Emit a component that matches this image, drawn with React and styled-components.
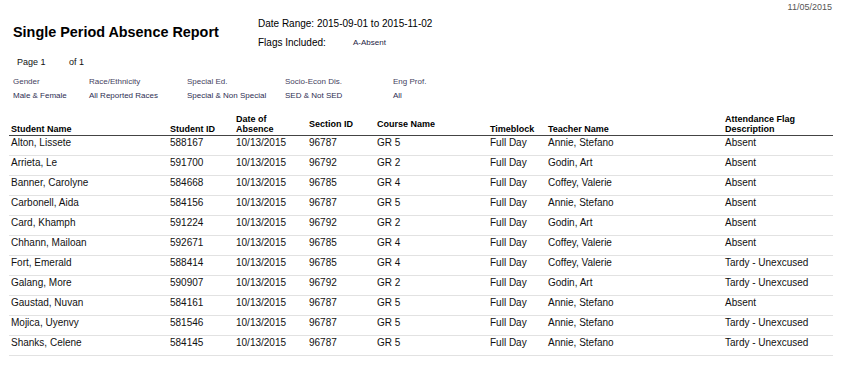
import React from "react";
import styled, { createGlobalStyle } from "styled-components";

const Global = createGlobalStyle`
  html, body { margin: 0; padding: 0; background: #fff; }
  body { font-family: "Liberation Sans", Arial, sans-serif; color: #111; }
`;

const Page = styled.div`
  width: 855px;
  height: 367px;
  overflow: hidden;
  background: #fff;
`;

const DateStamp = styled.div`
  text-align: right;
  padding: 2px 23px 0 0;
  font-size: 9px;
  line-height: 11px;
  color: #555;
`;

const Header = styled.div`
  display: flex;
  margin-top: 5px;
`;

const Title = styled.h1`
  margin: 6px 0 0;
  box-sizing: border-box;
  width: 258px;
  padding-left: 13px;
  font-size: 14.4px;
  line-height: 16px;
  font-weight: bold;
  color: #000;
`;

const Info = styled.div`
  display: flex;
  flex-direction: column;
  gap: 7px;
  font-size: 10px;
  line-height: 12px;
  color: #000;
`;

const InfoRow = styled.div`
  display: flex;
  align-items: center;
`;

const InfoLabel = styled.span`
  width: 95px;
`;

const Flag = styled.span`
  font-size: 8px;
  color: #1c1c44;
`;

const PageRow = styled.div`
  display: flex;
  margin-top: 8px;
  padding-left: 17px;
  font-size: 9px;
  line-height: 11px;
  color: #111;
`;

const PageCell = styled.span`
  width: ${(p) => p.$w || "auto"};
`;

const Filters = styled.div`
  display: grid;
  grid-template-columns: 76px 98px 98px 108px 1fr;
  row-gap: 4px;
  margin-top: 9px;
  padding-left: 13px;
  font-size: 8px;
  line-height: 10px;
`;

const FilterText = styled.span`
  color: ${(p) => (p.$value ? "#2e2e52" : "#45425e")};
`;

const Table = styled.div`
  margin: 13px 0 0 9px;
  width: 824px;
`;

const cols = "161px 66px 73px 68px 113px 58px 177px 108px";

const HeadRow = styled.div`
  display: grid;
  grid-template-columns: ${cols};
  height: 20px;
  padding-bottom: 1px;
  border-bottom: 1px solid #444;
`;

const HeadCell = styled.div`
  display: flex;
  align-items: ${(p) => (p.$middle ? "center" : "flex-end")};
  padding-left: ${(p) => (p.$first ? "2px" : "0")};
  font-size: 9px;
  line-height: 10px;
  font-weight: bold;
  color: #000;
  white-space: pre;
`;

const Row = styled.div`
  display: grid;
  grid-template-columns: ${cols};
  height: 19px;
  box-sizing: content-box;
  border-bottom: 1px solid #e2e2e2;
`;

const Cell = styled.div`
  padding: 1px 0 0 ${(p) => (p.$first ? "2px" : "0")};
  font-size: 10px;
  line-height: 12px;
  color: #111;
  white-space: nowrap;
`;

const filters = [
  ["Gender", "Male & Female"],
  ["Race/Ethnicity", "All Reported Races"],
  ["Special Ed.", "Special & Non Special"],
  ["Socio-Econ Dis.", "SED & Not SED"],
  ["Eng Prof.", "All"],
];

const headers = [
  { label: "Student Name" },
  { label: "Student ID" },
  { label: "Date of\nAbsence" },
  { label: "Section ID", middle: true },
  { label: "Course Name", middle: true },
  { label: "Timeblock" },
  { label: "Teacher Name" },
  { label: "Attendance Flag\nDescription" },
];

const rows = [
  ["Alton, Lissete", "588167", "96787", "GR 5", "Annie, Stefano", "Absent"],
  ["Arrieta, Le", "591700", "96792", "GR 2", "Godin, Art", "Absent"],
  ["Banner, Carolyne", "584668", "96785", "GR 4", "Coffey, Valerie", "Absent"],
  ["Carbonell, Aida", "584156", "96787", "GR 5", "Annie, Stefano", "Absent"],
  ["Card, Khamph", "591224", "96792", "GR 2", "Godin, Art", "Absent"],
  ["Chhann, Mailoan", "592671", "96785", "GR 4", "Coffey, Valerie", "Absent"],
  ["Fort, Emerald", "588414", "96785", "GR 4", "Coffey, Valerie", "Tardy - Unexcused"],
  ["Galang, More", "590907", "96792", "GR 2", "Godin, Art", "Tardy - Unexcused"],
  ["Gaustad, Nuvan", "584161", "96787", "GR 5", "Annie, Stefano", "Absent"],
  ["Mojica, Uyenvy", "581546", "96787", "GR 5", "Annie, Stefano", "Tardy - Unexcused"],
  ["Shanks, Celene", "584145", "96787", "GR 5", "Annie, Stefano", "Tardy - Unexcused"],
];

export default function App() {
  return (
    <Page>
      <Global />
      <DateStamp>11/05/2015</DateStamp>
      <Header>
        <Title>Single Period Absence Report</Title>
        <Info>
          <InfoRow>Date Range: 2015-09-01 to 2015-11-02</InfoRow>
          <InfoRow>
            <InfoLabel>Flags Included:</InfoLabel>
            <Flag>A-Absent</Flag>
          </InfoRow>
        </Info>
      </Header>
      <PageRow>
        <PageCell $w="52px">Page 1</PageCell>
        <PageCell>of 1</PageCell>
      </PageRow>
      <Filters>
        {filters.map(([l]) => (
          <FilterText key={l}>{l}</FilterText>
        ))}
        {filters.map(([l, v]) => (
          <FilterText key={l + "v"} $value>
            {v}
          </FilterText>
        ))}
      </Filters>
      <Table>
        <HeadRow>
          {headers.map((h, i) => (
            <HeadCell key={h.label} $middle={h.middle} $first={i === 0}>
              {h.label}
            </HeadCell>
          ))}
        </HeadRow>
        {rows.map((r) => (
          <Row key={r[0]}>
            <Cell $first>{r[0]}</Cell>
            <Cell>{r[1]}</Cell>
            <Cell>10/13/2015</Cell>
            <Cell>{r[2]}</Cell>
            <Cell>{r[3]}</Cell>
            <Cell>Full Day</Cell>
            <Cell>{r[4]}</Cell>
            <Cell>{r[5]}</Cell>
          </Row>
        ))}
      </Table>
    </Page>
  );
}
